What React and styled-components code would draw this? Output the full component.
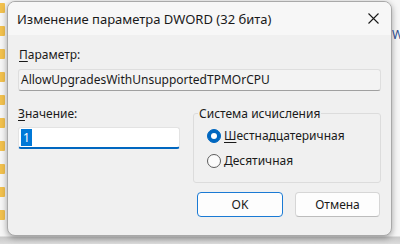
import React from "react";
import styled, { createGlobalStyle } from "styled-components";

const GlobalStyle = createGlobalStyle`
  html, body {
    margin: 0;
    padding: 0;
    background: #f4f4f4;
    overflow: hidden;
  }
  * {
    box-sizing: border-box;
  }
`;

const FONT = `"Noto Sans", "Open Sans", sans-serif`;

const Desktop = styled.div`
  display: flex;
  width: 400px;
  height: 244px;
  background: linear-gradient(#f6f6f6 0, #f6f6f6 236px, #c9c9c9 237px, #dcdcdc 244px);
`;

const SideStrip = styled.div`
  width: 7px;
  display: flex;
  flex-direction: column;
  gap: 13px;
  padding-top: 3px;
`;

const Folder = styled.div`
  width: 5px;
  height: 10px;
  background: #f2c14e;
  border-radius: 0 1px 1px 0;
`;

const RightStrip = styled.div`
  flex: 1;
  padding-top: 26px;
  font-family: ${FONT};
  font-size: 12px;
  color: #2b4a8a;
  overflow: hidden;
`;

const Window = styled.div`
  margin-top: 1px;
  width: 385px;
  height: 235px;
  background: #f0f0f0;
  border: 1px solid #a9a9a9;
  border-radius: 8px;
  box-shadow: 0 2px 6px rgba(0, 0, 0, 0.35);
  overflow: hidden;
  display: flex;
  flex-direction: column;
  font-family: ${FONT};
  color: #1a1a1a;
`;

const TitleBar = styled.div`
  height: 33px;
  flex: none;
  display: flex;
  align-items: center;
  justify-content: space-between;
  background: #f7f7f7;
  padding: 0 12px 0 9px;
`;

const Title = styled.span`
  font-size: 13px;
  color: #1a1a1a;
`;

const Body = styled.div`
  padding: 12px 10px 0 10px;
  display: flex;
  flex-direction: column;
`;

const Label = styled.div`
  font-size: 12px;
  line-height: 15px;
  padding-left: ${(p) => p.$indent || 0}px;
  color: #1a1a1a;
`;

const Mn = styled.span`
  text-decoration: underline;
  text-underline-offset: 2px;
`;

const ReadField = styled.div`
  margin-top: 7px;
  height: 22px;
  background: #f3f3f3;
  border: 1px solid #dedede;
  border-bottom-color: #a0a0a0;
  border-radius: 3px;
  font-size: 12px;
  line-height: 20px;
  padding-left: 2px;
`;

const Row = styled.div`
  margin-top: 15px;
  display: grid;
  grid-template-columns: 162px 188px;
  column-gap: 13px;
`;

const Column = styled.div`
  display: flex;
  flex-direction: column;
`;

const Input = styled.div`
  margin-top: 6px;
  height: 22px;
  background: #ffffff;
  border: 1px solid #e3e3e3;
  border-bottom: 2px solid #0067c0;
  border-radius: 3px;
  padding: 1px 0 0 2px;
  font-size: 12px;
  line-height: 17px;
`;

const Selected = styled.span`
  display: inline-block;
  background: #0078d7;
  color: #ffffff;
  padding: 0 2px;
`;

const Group = styled.fieldset`
  margin: 0;
  height: 77px;
  border: 1px solid #dcdcdc;
  border-radius: 3px;
  padding: 8px 0 0 13px;
  display: flex;
  flex-direction: column;
  gap: 11px;
`;

const Legend = styled.legend`
  font-size: 12px;
  line-height: 15px;
  padding: 0 1px;
  margin-left: -9px;
  color: #1a1a1a;
`;

const RadioRow = styled.div`
  display: flex;
  align-items: center;
  gap: 3px;
  font-size: 12px;
  line-height: 14px;
`;

const Radio = styled.span`
  width: 14px;
  height: 14px;
  border-radius: 50%;
  flex: none;
  display: flex;
  align-items: center;
  justify-content: center;
  background: ${(p) => (p.$on ? "#0067c0" : "#fbfbfb")};
  border: 1px solid ${(p) => (p.$on ? "#0067c0" : "#5c5c5c")};
  &::after {
    content: "";
    width: 6px;
    height: 6px;
    border-radius: 50%;
    background: #ffffff;
    display: ${(p) => (p.$on ? "block" : "none")};
  }
`;

const Buttons = styled.div`
  margin-top: 9px;
  display: flex;
  justify-content: flex-end;
  gap: 12px;
  padding-right: 1px;
`;

const Button = styled.button`
  width: ${(p) => p.$w}px;
  height: 25px;
  background: #fdfdfd;
  border: 1px solid ${(p) => (p.$primary ? "#1a7ad4" : "#d6d6d6")};
  border-bottom-color: ${(p) => (p.$primary ? "#1a7ad4" : "#bcbcbc")};
  border-radius: 4px;
  font-family: ${FONT};
  font-size: 12px;
  color: #1a1a1a;
  padding: 0;
`;

const CloseIcon = () => (
  <svg width="11" height="11" viewBox="0 0 11 11">
    <path d="M0.5 0.5 L10.5 10.5 M10.5 0.5 L0.5 10.5" stroke="#1a1a1a" strokeWidth="1.1" />
  </svg>
);

export default function App() {
  return (
    <>
      <GlobalStyle />
      <Desktop>
        <SideStrip>
          {Array.from({ length: 10 }).map((_, i) => (
            <Folder key={i} />
          ))}
        </SideStrip>
        <Window>
          <TitleBar>
            <Title>Изменение параметра DWORD (32 бита)</Title>
            <CloseIcon />
          </TitleBar>
          <Body>
            <Label $indent={1}>
              <Mn>П</Mn>араметр:
            </Label>
            <ReadField>AllowUpgradesWithUnsupportedTPMOrCPU</ReadField>
            <Row>
              <Column>
                <Label>
                  <Mn>З</Mn>начение:
                </Label>
                <Input>
                  <Selected>1</Selected>
                </Input>
              </Column>
              <Group>
                <Legend>Система исчисления</Legend>
                <RadioRow>
                  <Radio $on />
                  <span>
                    <Mn>Ш</Mn>естнадцатеричная
                  </span>
                </RadioRow>
                <RadioRow>
                  <Radio />
                  <span>Десятичная</span>
                </RadioRow>
              </Group>
            </Row>
            <Buttons>
              <Button $w={86} $primary>
                OK
              </Button>
              <Button $w={85}>Отмена</Button>
            </Buttons>
          </Body>
        </Window>
        <RightStrip>W</RightStrip>
      </Desktop>
    </>
  );
}
